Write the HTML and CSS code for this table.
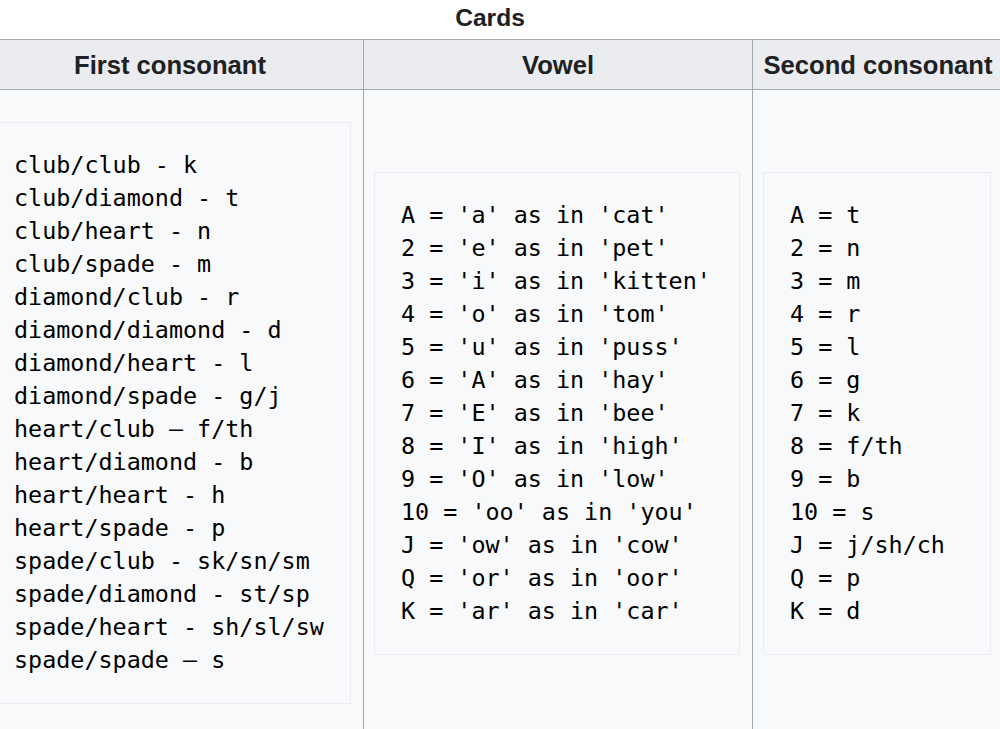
FILE: index.html
```html
<!DOCTYPE html>
<html lang="en">
<head>
<meta charset="utf-8">
<title>Cards</title>
<link rel="stylesheet" href="styles.css">
</head>
<body>
<table class="cards">
<caption class="cards-caption">Cards</caption>
<colgroup>
<col class="c1">
<col class="c2">
<col class="c3">
</colgroup>
<thead>
<tr>
<th>First consonant</th>
<th>Vowel</th>
<th>Second consonant</th>
</tr>
</thead>
<tbody>
<tr>
<td><pre class="code">club/club - k
club/diamond - t
club/heart - n
club/spade - m
diamond/club - r
diamond/diamond - d
diamond/heart - l
diamond/spade - g/j
heart/club – f/th
heart/diamond - b
heart/heart - h
heart/spade - p
spade/club - sk/sn/sm
spade/diamond - st/sp
spade/heart - sh/sl/sw
spade/spade – s</pre></td>
<td><pre class="code">A = 'a' as in 'cat'
2 = 'e' as in 'pet'
3 = 'i' as in 'kitten'
4 = 'o' as in 'tom'
5 = 'u' as in 'puss'
6 = 'A' as in 'hay'
7 = 'E' as in 'bee'
8 = 'I' as in 'high'
9 = 'O' as in 'low'
10 = 'oo' as in 'you'
J = 'ow' as in 'cow'
Q = 'or' as in 'oor'
K = 'ar' as in 'car'</pre></td>
<td><pre class="code">A = t
2 = n
3 = m
4 = r
5 = l
6 = g
7 = k
8 = f/th
9 = b
10 = s
J = j/sh/ch
Q = p
K = d</pre></td>
</tr>
</tbody>
</table>
</body>
</html>
```
FILE: styles.css
```css
html, body {
  margin: 0;
  padding: 0;
  background: #ffffff;
  overflow: hidden;
}
body {
  font-family: "Liberation Sans", Arial, sans-serif;
  color: #202122;
}
.cards {
  margin-left: -24px;
  width: 1027px;
  table-layout: fixed;
  border-collapse: collapse;
  background: #f8f9fa;
  color: #202122;
}
.c1 { width: 387px; }
.c2 { width: 389px; }
.c3 { width: 251px; }
.cards-caption {
  font-weight: bold;
  font-size: 24.6px;
  line-height: 36px;
  padding-bottom: 3px;
  background: #ffffff;
  text-align: center;
}
.cards th {
  background: #eaecf0;
  border: 1px solid #a2a9b1;
  font-size: 25.6px;
  font-weight: bold;
  line-height: 28px;
  padding: 11px 8px 10px;
  text-align: center;
  white-space: nowrap;
}
.cards td {
  border: 1px solid #a2a9b1;
  padding: 32px 12px 31px 10px;
  vertical-align: middle;
}
.code {
  margin: 0;
  padding: 26px;
  background: #f8f9fa;
  border: 1px solid #eaecf0;
  font-family: "DejaVu Sans Mono", monospace;
  font-size: 23.4px;
  line-height: 33px;
  color: #000000;
  white-space: pre;
  overflow: hidden;
}
```
